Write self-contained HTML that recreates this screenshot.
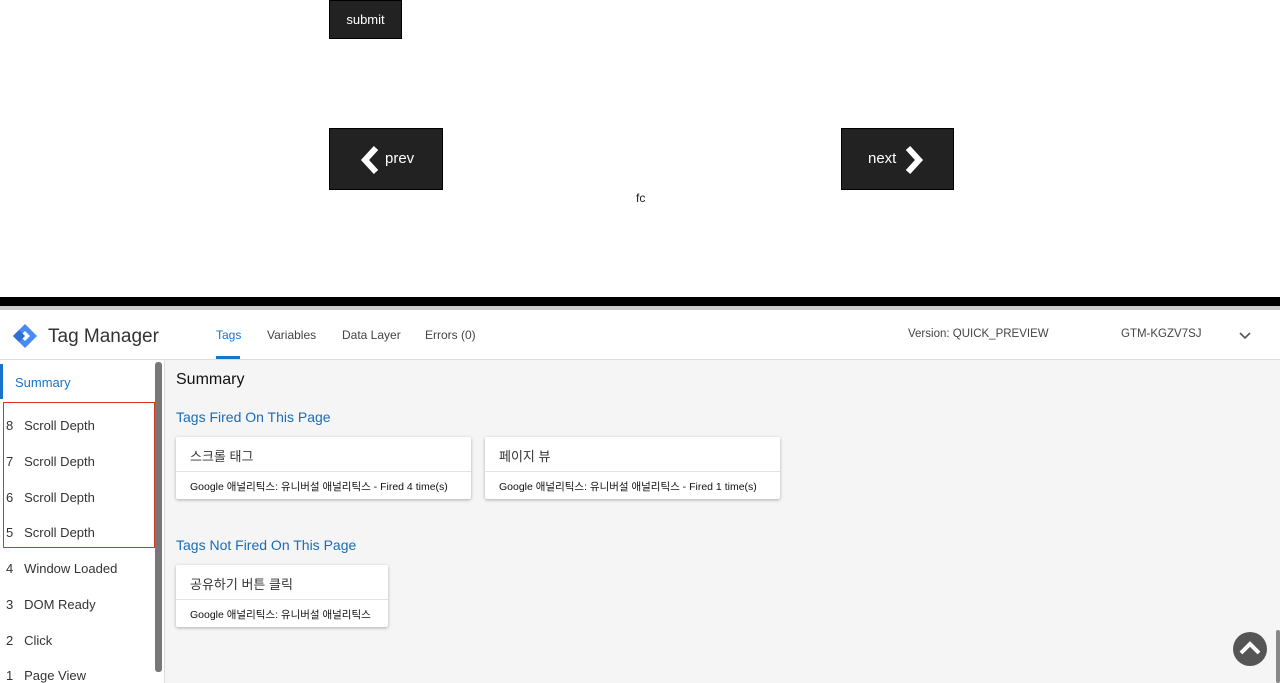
<!DOCTYPE html>
<html><head><style>
*{margin:0;padding:0;box-sizing:border-box}
body{width:1280px;height:683px;overflow:hidden;background:#fff;font-family:"Liberation Sans","Noto Sans CJK KR",sans-serif;position:relative}
.a{position:absolute}
.btn{background:#222;color:#fff;border:1px solid #000}
.nav{font-size:12px;color:#444;top:328px}
.side div{position:absolute;left:6px;font-size:13.5px;color:#333}
.card{position:absolute;background:#fff;box-shadow:0 1px 3px rgba(0,0,0,.3);border-radius:2px}
.card .t{height:35px;border-bottom:1px solid #e3e3e3;padding:9px 14px;font-size:13px;color:#333}
.card .b{padding:7px 14px;font-size:10.5px;color:#111;white-space:nowrap}
</style></head><body>
<div class="a btn" style="left:329px;top:0;width:73px;height:39px;font-size:13px;text-align:center;line-height:38px">submit</div>
<div class="a btn" style="left:329px;top:128px;width:114px;height:62px;font-size:15px">
<svg class="a" style="left:30px;top:16px" width="22" height="30" viewBox="0 0 22 30"><path d="M16 3L5 15l11 12" stroke="#fff" stroke-width="6" fill="none"/></svg>
<span class="a" style="left:55px;top:21px">prev</span></div>
<div class="a btn" style="left:841px;top:128px;width:113px;height:62px;font-size:15px">
<span class="a" style="left:26px;top:21px">next</span>
<svg class="a" style="left:60px;top:16px" width="22" height="30" viewBox="0 0 22 30"><path d="M6 3l11 12L6 27" stroke="#fff" stroke-width="6" fill="none"/></svg></div>
<div class="a" style="left:636px;top:191px;font-size:12px;color:#222">fc</div>
<div class="a" style="left:0;top:297px;width:1280px;height:9px;background:#000"></div>
<div class="a" style="left:0;top:306px;width:1280px;height:4px;background:#ccc"></div>
<div class="a" style="left:0;top:359px;width:1280px;height:1px;background:#ddd"></div>
<svg class="a" style="left:11px;top:322px" width="28" height="28" viewBox="0 0 28 28"><path d="M14 2L26 14 14 26 2 14Z" fill="#4a8af4"/><path d="M14 9L19 14 14 19 9 14Z" fill="#fff"/><path d="M2 14L8 8 14 14 8 20Z" fill="#2d6fd8"/></svg>
<div class="a" style="left:48px;top:326px;font-size:19px;color:#333">Tag Manager</div>
<div class="a nav" style="left:216px;color:#1a73c8">Tags</div>
<div class="a" style="left:216px;top:356px;width:24px;height:3px;background:#1a73c8"></div>
<div class="a nav" style="left:267px">Variables</div>
<div class="a nav" style="left:342px">Data Layer</div>
<div class="a nav" style="left:425px">Errors (0)</div>
<div class="a nav" style="left:908px;font-size:11.5px">Version: QUICK_PREVIEW</div>
<div class="a nav" style="left:1121px;font-size:11.5px">GTM-KGZV7SJ</div>
<svg class="a" style="left:1239px;top:331px" width="12" height="10"><path d="M1 2l5 5 5-5" stroke="#555" stroke-width="1.6" fill="none"/></svg>
<div class="a" style="left:164px;top:360px;width:1116px;height:323px;background:#f5f5f5;border-left:1px solid #ddd"></div>
<div class="a" style="left:0;top:364px;width:3px;height:35px;background:#1a73c8"></div>
<div class="a" style="left:3px;top:402px;width:152px;height:146px;border:1.5px solid #d32;"></div>
<div class="a" style="left:155px;top:362px;width:7px;height:310px;background:#777;border-radius:3px"></div>
<div class="side">
<div style="left:15px;top:375px;color:#1a73c8;font-size:13px">Summary</div>
<div style="top:418px;font-size:13px">8&nbsp;&nbsp;&nbsp;Scroll Depth</div>
<div style="top:454px;font-size:13px">7&nbsp;&nbsp;&nbsp;Scroll Depth</div>
<div style="top:490px;font-size:13px">6&nbsp;&nbsp;&nbsp;Scroll Depth</div>
<div style="top:525px;font-size:13px">5&nbsp;&nbsp;&nbsp;Scroll Depth</div>
<div style="top:561px;font-size:13px">4&nbsp;&nbsp;&nbsp;Window Loaded</div>
<div style="top:597px;font-size:13px">3&nbsp;&nbsp;&nbsp;DOM Ready</div>
<div style="top:633px;font-size:13px">2&nbsp;&nbsp;&nbsp;Click</div>
<div style="top:668px;font-size:13px">1&nbsp;&nbsp;&nbsp;Page View</div>
</div>
<div class="a" style="left:176px;top:371px;font-size:16px;color:#111">Summary</div>
<div class="a" style="left:176px;top:409px;font-size:14px;color:#1a6bb8">Tags Fired On This Page</div>
<div class="card" style="left:176px;top:437px;width:295px;height:62px"><div class="t">스크롤 태그</div><div class="b">Google 애널리틱스: 유니버설 애널리틱스 - Fired 4 time(s)</div></div>
<div class="card" style="left:485px;top:437px;width:295px;height:62px"><div class="t">페이지 뷰</div><div class="b">Google 애널리틱스: 유니버설 애널리틱스 - Fired 1 time(s)</div></div>
<div class="a" style="left:176px;top:537px;font-size:14px;color:#1a6bb8">Tags Not Fired On This Page</div>
<div class="card" style="left:176px;top:565px;width:212px;height:62px"><div class="t">공유하기 버튼 클릭</div><div class="b">Google 애널리틱스: 유니버설 애널리틱스</div></div>
<div class="a" style="left:1233px;top:632px;width:34px;height:34px;border-radius:50%;background:#555"></div>
<svg class="a" style="left:1238px;top:638px" width="24" height="20"><path d="M3 15L12 6l9 9" stroke="#fff" stroke-width="4" fill="none"/></svg>
<div class="a" style="left:1276px;top:630px;width:4px;height:53px;background:#888;border-radius:2px"></div>
</body></html>
